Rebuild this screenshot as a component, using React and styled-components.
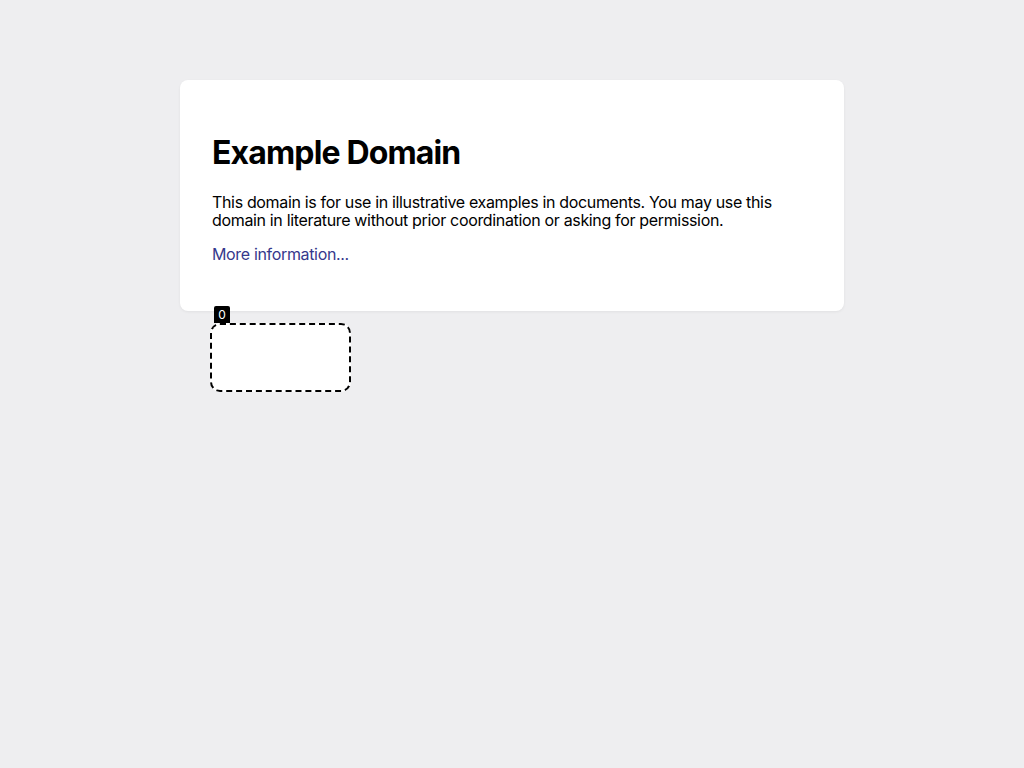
import React from "react";
import styled, { createGlobalStyle } from "styled-components";

const Global = createGlobalStyle`
  html, body { margin: 0; padding: 0; background: #eeeef0; }
  body { font-family: Inter, "Noto Sans", sans-serif; color: #000; }
`;

const Page = styled.div`
  width: 664px;
  margin: 80px auto 0;
`;

const Card = styled.div`
  background: #fff;
  border-radius: 8px;
  padding: 32px;
  box-shadow: 0 1px 3px rgba(0, 0, 0, 0.06);
`;

const Title = styled.h1`
  font-size: 32px;
  font-weight: 700;
  margin: 21px 0;
  letter-spacing: -0.85px;
`;

const Text = styled.p`
  font-size: 16px;
  line-height: 18px;
  margin: 16px 0;
  letter-spacing: -0.34px;
  &:last-child { margin-bottom: 16px; }
`;

const Link = styled.a`
  color: #35388c;
  text-decoration: none;
`;

const FrameArea = styled.div`
  padding: 12px 0 0 30px;
`;

const Frame = styled.div`
  position: relative;
  width: 137px;
  height: 65px;
  border: 2px dashed #000;
  border-radius: 10px;
  background: #fff;
`;

const Badge = styled.span`
  position: absolute;
  left: 2px;
  top: -19px;
  width: 16px;
  height: 17px;
  background: #000;
  color: #fff;
  font-size: 12px;
  line-height: 17px;
  text-align: center;
  border-radius: 2px 2px 0 0;
`;

export default function App() {
  return (
    <>
      <Global />
      <Page>
        <Card>
          <Title>Example Domain</Title>
          <Text>
            This domain is for use in illustrative examples in documents. You may use this
            domain in literature without prior coordination or asking for permission.
          </Text>
          <Text>
            <Link href="#">More information...</Link>
          </Text>
        </Card>
        <FrameArea>
          <Frame>
            <Badge>0</Badge>
          </Frame>
        </FrameArea>
      </Page>
    </>
  );
}
